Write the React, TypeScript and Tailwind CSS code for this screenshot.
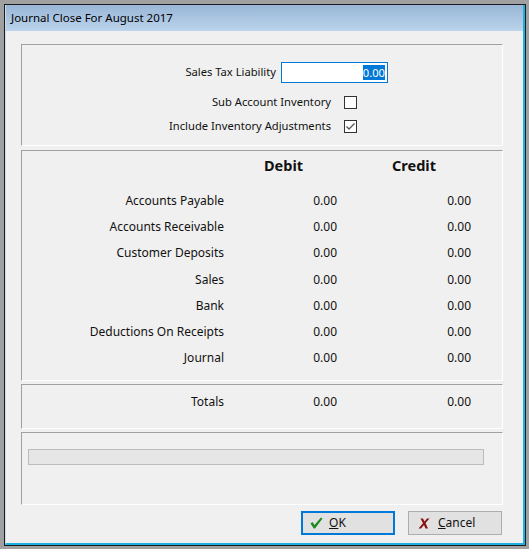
import React from 'react';

const rows = [
  'Accounts Payable',
  'Accounts Receivable',
  'Customer Deposits',
  'Sales',
  'Bank',
  'Deductions On Receipts',
  'Journal',
];

function GroupBox({ className, children }: { className: string; children?: React.ReactNode }) {
  return (
    <div className={`border-t border-l border-[#a0a0a0] border-b border-r border-b-white border-r-white ${className}`}>
      {children}
    </div>
  );
}

function CheckBox({ checked }: { checked?: boolean }) {
  return (
    <div className="w-[13px] h-[13px] border border-[#333333] bg-white flex items-center justify-center">
      {checked && (
        <svg width="11" height="11" viewBox="0 0 11 11">
          <path d="M1.5 5.5 L4 8 L9.5 2.5" fill="none" stroke="#555" strokeWidth="1.3" />
        </svg>
      )}
    </div>
  );
}

function OkIcon() {
  return (
    <svg width="13" height="12" viewBox="0 0 13 12">
      <path d="M0.5 6.5 L2.5 5 L4.5 8 L11 0.5 L12.5 1.5 L5 11.5 L3.8 11.5 Z" fill="#1c8a1c" />
    </svg>
  );
}

function CancelIcon() {
  return (
    <svg width="12" height="11" viewBox="0 0 12 11">
      <path d="M2.5 0.5 L5 0.5 L6.5 3.5 L9 0.5 L11.5 0.5 L7.5 5 L10 10.5 L7.5 10.5 L6 7 L3 10.5 L0.5 10.5 L5 5.3 Z" fill="#8b1010" />
    </svg>
  );
}

export default function App() {
  return (
    <div
      className="w-[529px] h-[549px] bg-[#a0a0a0] pl-[4px] pt-[4px] text-[12px] text-[#111]"
      style={{ fontFamily: '"Noto Sans", "Open Sans", sans-serif' }}
    >
      <div className="w-[522px] h-[542px] border border-[#1c1c1c] flex flex-col">
        <div className="flex-1 flex flex-col border-l border-l-[#c8dcf0] border-r-2 border-b-2 border-r-[#1cb0e0] border-b-[#1cb0e0]">
          {/* title bar */}
          <div className="h-[26px] bg-gradient-to-b from-[#99b6d6] to-[#bcd4ec] flex items-center pl-[5px] text-[11.5px] text-black">
            Journal Close For August 2017
          </div>

          <div className="flex-1 bg-[#f0f0f0] pl-[15px] pr-[20px] pt-[13px] flex flex-col">
            {/* options */}
            <GroupBox className="h-[102px] pt-[17px] flex flex-col text-[11.2px]">
              <div className="flex items-center h-[21px]">
                <div className="w-[254px] text-right">Sales Tax Liability</div>
                <div className="ml-[5px] w-[107px] h-[21px] border border-[#0078d7] bg-white flex items-center justify-end pr-[2px]">
                  <span className="bg-[#0078d7] text-white leading-[15px]">0.00</span>
                </div>
              </div>
              <div className="flex items-center h-[13px] mt-[13px]">
                <div className="w-[309px] text-right">Sub Account Inventory</div>
                <div className="ml-[13px]">
                  <CheckBox />
                </div>
              </div>
              <div className="flex items-center h-[13px] mt-[11px]">
                <div className="w-[309px] text-right">Include Inventory Adjustments</div>
                <div className="ml-[13px]">
                  <CheckBox checked />
                </div>
              </div>
            </GroupBox>

            {/* accounts */}
            <GroupBox className="mt-[4px] h-[231px] pt-[4px]">
              <div className="grid grid-cols-[202px_113px_134px] h-[20px] items-center font-bold text-[14.5px]">
                <div />
                <div className="pl-[40px]">Debit</div>
                <div className="pl-[55px]">Credit</div>
              </div>
              <div className="mt-[13px]">
                {rows.map((label) => (
                  <div key={label} className="grid grid-cols-[202px_113px_134px] h-[26.2px] items-center">
                    <div className="text-right">{label}</div>
                    <div className="text-right">0.00</div>
                    <div className="text-right">0.00</div>
                  </div>
                ))}
              </div>
            </GroupBox>

            {/* totals */}
            <GroupBox className="mt-[3px] h-[45px] pt-[4px]">
              <div className="grid grid-cols-[202px_113px_134px] h-[26px] items-center">
                <div className="text-right">Totals</div>
                <div className="text-right">0.00</div>
                <div className="text-right">0.00</div>
              </div>
            </GroupBox>

            {/* progress */}
            <GroupBox className="mt-[3px] h-[73px] pt-[16px] pl-[6px]">
              <div className="w-[456px] h-[16px] border border-[#bcbcbc] bg-[#e6e6e6]" />
            </GroupBox>

            <div className="mt-[6px] flex justify-end gap-[13px] mr-[1px]">
              <button className="w-[94px] h-[24px] border-2 border-[#0078d7] bg-[#e1e1e1] flex items-center pl-[7px] gap-[6px]">
                <OkIcon />
                <span>
                  <span className="underline">O</span>K
                </span>
              </button>
              <button className="w-[94px] h-[24px] border border-[#adadad] bg-[#e1e1e1] flex items-center pl-[9px] gap-[8px]">
                <CancelIcon />
                <span>
                  <span className="underline">C</span>ancel
                </span>
              </button>
            </div>
          </div>
        </div>
      </div>
    </div>
  );
}
